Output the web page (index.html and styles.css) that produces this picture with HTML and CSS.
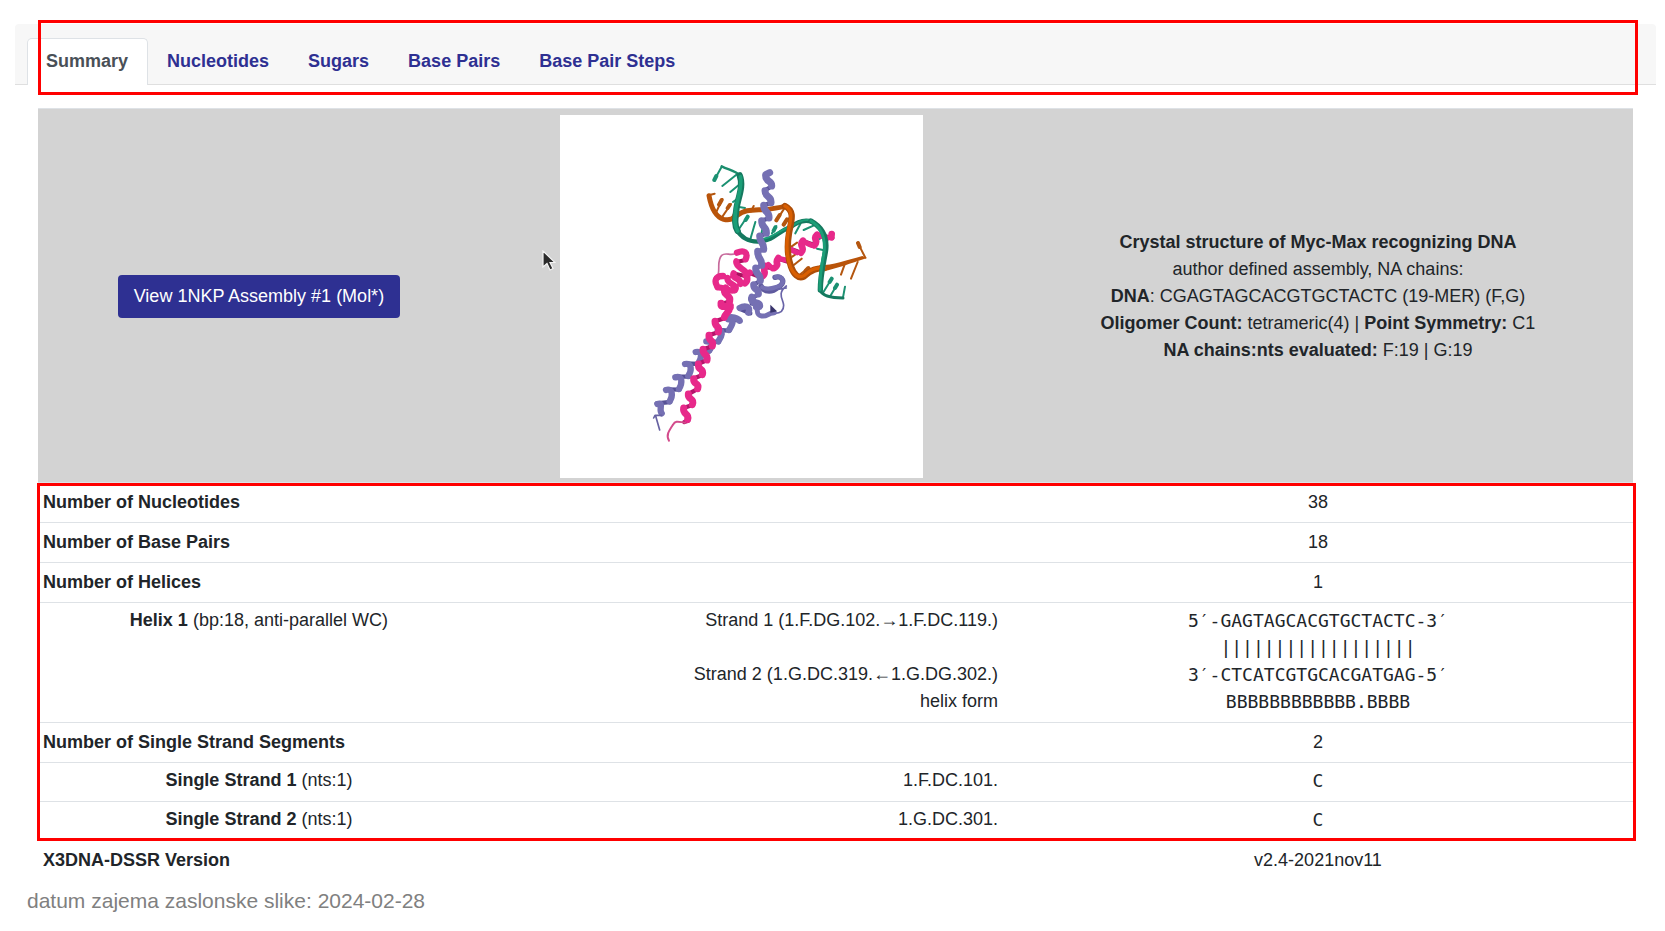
FILE: index.html
```html
<!DOCTYPE html>
<html lang="sl">
<head>
<meta charset="utf-8">
<title>1NKP – Summary</title>
<meta name="viewport" content="width=device-width, initial-scale=1">
<link rel="stylesheet" href="styles.css">
</head>
<body>
<main class="card">
  <nav class="tabs" aria-label="Annotations">
    <a class="tab tab-active" href="#summary" aria-current="page">Summary</a>
    <a class="tab" href="#nucleotides">Nucleotides</a>
    <a class="tab" href="#sugars">Sugars</a>
    <a class="tab" href="#base-pairs">Base Pairs</a>
    <a class="tab" href="#steps">Base Pair Steps</a>
  </nav>
  <div class="card-body" id="summary">
    <table class="summary">
      <colgroup><col class="col-name"><col class="col-detail"><col class="col-value"></colgroup>
      <tbody class="hero">
        <tr>
          <td><button class="view-button" type="button">View 1NKP Assembly #1 (Mol*)</button></td>
          <td class="hero-picture">
            <svg class="molecule" viewBox="-241 -105 1089 1089" role="img" aria-label="Myc-Max bound to DNA" fill="none" stroke-linecap="round" stroke-linejoin="round">
              <rect x="-243" y="-105" width="1092" height="1089" fill="#fff"/>
              <!-- base sticks -->
              <g stroke="#1b9172" stroke-width="6">
                <path d="M244 50L222 90M290 73L246 108M298 103L270 126M300 140L278 156M292 170L314 174M294 240L322 198M330 268L345 216M360 268L367 232M395 250L408 228M465 250L480 222M490 240L526 224M504 286L545 262M530 296L548 300M548 428L574 386M570 438L590 404M608 442L614 410"/>
                <path stroke-width="12" d="M228 78L222 90M322 200L316 210M405 232L400 242M574 386L568 396M590 404L584 414"/>
              </g>
              <g stroke="#b4560f" stroke-width="6">
                <path d="M205 136L223 131M226 190L246 147M242 206L272 162M272 208L284 184M332 184L340 168M408 212L434 172M430 226L444 206M450 292L470 278M456 320L475 306M452 352L484 326M476 376L504 354M612 346L602 374M652 336L632 386M675 323L652 278"/>
                <path stroke-width="12" d="M244 150L236 164M268 165L262 174M418 195L408 211M440 208L430 224M504 354L496 362M658 291L653 279"/>
              </g>
              <!-- DNA strands, far side -->
              <path stroke="#b9540a" stroke-width="15" d="M206 137C212 170 222 200 250 208C284 216 286 188 320 182C360 178 400 180 434 168"/>
              <path stroke="#15795f" stroke-width="13" d="M290 240C302 262 324 274 352 275C408 270 410 244 450 232C470 216 492 208 514 215"/>
              <path stroke="#1b9e77" stroke-width="6" d="M356 270C404 262 414 240 456 228C474 214 490 206 512 211"/>
              <path stroke="#1b8d6d" stroke-width="7" d="M244 49C266 60 284 62 298 76"/>
              <path stroke="#15795f" stroke-width="19" d="M298 76C312 110 290 150 288 180C284 210 282 226 292 243"/>
              <path stroke="#1b9e77" stroke-width="11" d="M300 80C308 112 288 150 286 182C282 210 282 226 292 243"/>
              <!-- pink arm behind the DNA -->
              <g stroke="#a9125f" stroke-width="13">
                <path d="M576 264L534 254M524 286L490 274M482 308L450 296M440 334L414 326M404 354L378 352M362 382L330 370"/>
              </g>
              <g stroke="#e7298a" stroke-width="20">
                <path d="M574 252L573 262M530 254C514 268 538 270 522 286M488 272C472 288 498 292 482 308M414 324C400 342 422 340 402 354M376 348C362 366 386 366 362 382M328 368C310 380 330 386 314 400"/>
              </g>
              <path stroke="#e7298a" stroke-width="16" d="M536 256L562 264M492 276L514 286M450 298L470 308M416 326L438 330M384 344L396 356"/>
              <!-- DNA strands, near side -->
              <path stroke="#ad4d08" stroke-width="19" d="M434 168C466 184 452 214 446 250C440 286 442 322 452 350C460 372 474 388 490 380C516 356 530 356 552 354"/>
              <path fill="#b9540a" d="M536 346C580 346 616 331 666 318L680 324C630 340 590 356 548 364Z"/>
              <path stroke="#d95f02" stroke-width="10" d="M434 168C464 184 448 214 443 250C437 286 440 322 450 350C460 374 476 386 492 376C516 352 530 356 552 352"/>
              <path stroke="#15795f" stroke-width="16" d="M512 213C546 232 560 264 556 300C552 330 540 370 540 420"/>
              <path stroke="#15795f" stroke-width="9" d="M540 422C548 440 574 444 608 444"/>
              <path stroke="#1b9e77" stroke-width="9" d="M512 213C544 232 554 264 552 300C548 330 537 370 539 420"/>
              <!-- loop regions -->
              <path stroke="#c76a9c" stroke-width="5" d="M290 308C272 322 258 304 244 316C230 332 238 350 234 372"/>
              <path stroke="#a9125f" stroke-width="12" d="M316 330L288 336M314 378L280 370M284 424L236 412M226 384L228 410"/>
              <path stroke="#e7298a" stroke-width="19" d="M290 308C312 298 324 308 316 328M288 334C284 354 324 358 316 376M280 370C272 388 304 382 300 402M248 378C224 378 222 394 230 408M262 384C256 402 296 404 284 420C268 428 248 410 232 412"/>
              <path stroke="#5f5a9e" stroke-width="16" d="M362 408C374 430 398 426 412 412C438 400 428 376 404 382"/>
              <path stroke="#7570b3" stroke-width="13" d="M366 412C386 422 402 412 418 408C436 394 424 376 406 381"/>
              <path stroke="#6964a8" stroke-width="5" d="M412 418L438 414M438 408C408 430 430 450 430 466C430 486 418 490 404 490"/>
              <!-- long purple helix, lower half -->
              <path stroke="#565196" stroke-width="13" d="M362 468L334 460M330 490L298 476M300 512L264 508M268 542L232 540M236 576L198 574M208 604L166 606M176 642L134 640M146 680L105 680M118 719L77 718M90 756L49 760"/>
              <path stroke="#7570b3" stroke-width="19" d="M334 440C324 464 364 450 358 470M298 474C312 466 334 468 324 488M264 508C268 494 296 506 298 512M264 508C286 508 274 526 266 540M232 540C252 540 244 560 234 574M198 574C220 574 216 590 206 602M166 606C188 602 184 624 174 640M134 642C156 638 154 662 144 678M105 682C128 676 126 700 116 717M77 720C98 714 98 738 88 754M51 762C72 756 54 778 64 790"/>
              <path stroke="#7570b3" stroke-width="15" d="M344 462C358 478 342 494 364 498C384 500 378 490 402 488"/>
              <path fill="#38346c" d="M390 464L410 484L390 488Z"/>
              <path stroke="#6762a2" stroke-width="5" d="M64 796L44 796L40 804M46 798L58 840"/>
              <!-- purple helix, upper half -->
              <path stroke="#5a559a" stroke-width="13" d="M396 108L372 122M394 158L370 166M388 204L364 212M380 250L358 258M372 298L352 304M366 346L346 354M362 392L340 404M356 432L336 444"/>
              <path stroke="#7570b3" stroke-width="21" d="M388 68L376 74C374 98 396 90 394 108M374 122C374 144 394 136 392 158M370 166C370 190 388 182 386 204M364 212C364 236 380 228 378 250M358 258C358 282 372 276 370 298M352 304C352 330 366 324 364 346M346 354C346 378 362 370 360 392M340 404C340 424 356 412 354 432M336 444C336 466 350 454 348 470"/>
              <!-- pink helix -->
              <path stroke="#b3156a" stroke-width="13" d="M270 454L242 462M254 504L224 514M236 546L204 556M218 588L188 598M202 630L172 642M188 674L158 686M174 716L144 732M158 764L130 774M144 812L132 816"/>
              <path stroke="#e7298a" stroke-width="21" d="M256 414C240 438 274 430 268 454M242 460C240 482 272 458 270 472M270 468C266 490 256 488 252 502M224 514C224 536 240 524 234 546M206 556C204 578 222 566 216 588M188 598C188 620 204 608 200 630M174 642C172 664 192 652 186 674M160 686C158 706 178 696 172 716M144 732C142 752 164 742 156 764M130 774C126 796 148 788 142 808"/>
              <path stroke="#d34c8c" stroke-width="6" d="M134 818C116 816 106 810 98 824C86 842 76 856 86 872"/>
            </svg>
          </td>
          <td>
            <strong>Crystal structure of Myc-Max recognizing DNA</strong><br>
            author defined assembly, NA chains:<br>
            <strong>DNA</strong>: CGAGTAGCACGTGCTACTC (19-MER) (F,G)<br>
            <strong>Oligomer Count:</strong> tetrameric(4) | <strong>Point Symmetry:</strong> C1<br>
            <strong>NA chains:nts evaluated:</strong> F:19 | G:19
          </td>
        </tr>
      </tbody>
      <tbody class="counts marked">
        <tr><th scope="row" colspan="2">Number of Nucleotides</th><td>38</td></tr>
        <tr><th scope="row" colspan="2">Number of Base Pairs</th><td>18</td></tr>
        <tr><th scope="row" colspan="2">Number of Helices</th><td>1</td></tr>
        <tr class="sub">
          <td><strong>Helix 1</strong> (bp:18, anti-parallel WC)</td>
          <td class="detail">Strand 1 (1.F.DG.102.→1.F.DC.119.)<br><br>Strand 2 (1.G.DC.319.←1.G.DG.302.)<br>helix form</td>
          <td class="sequence">5′-GAGTAGCACGTGCTACTC-3′<br>||||||||||||||||||<br>3′-CTCATCGTGCACGATGAG-5′<br>BBBBBBBBBBBB.BBBB</td>
        </tr>
        <tr><th scope="row" colspan="2">Number of Single Strand Segments</th><td>2</td></tr>
        <tr class="sub"><td><strong>Single Strand 1</strong> (nts:1)</td><td class="detail">1.F.DC.101.</td><td class="sequence">C</td></tr>
        <tr class="sub"><td><strong>Single Strand 2</strong> (nts:1)</td><td class="detail">1.G.DC.301.</td><td class="sequence">C</td></tr>
      </tbody>
      <tbody class="counts">
        <tr><th scope="row" colspan="2">X3DNA-DSSR Version</th><td>v2.4-2021nov11</td></tr>
      </tbody>
    </table>
  </div>
  <svg class="pointer" viewBox="0 0 14 22" aria-hidden="true"><path d="M1 1V17L5 13.500L8 20L11 18.500L8 12.500H13Z" fill="#2b2b2b" stroke="#f4f4f4" stroke-width="1.200"/></svg>
</main>
<p class="caption">datum zajema zaslonske slike: 2024-02-28</p>
</body>
</html>
```
FILE: styles.css
```css
* {
  box-sizing: border-box;
}

body {
  margin: 0;
  padding: 24px 9px 0 15px;
  background: #fff;
  color: #212529;
  font: 18px/27px "Liberation Sans", Arial, sans-serif;
}

.card {
  position: relative;
}

.tabs {
  position: relative;
  display: flex;
  padding: 14px 12px 0;
  background: #f7f7f7;
  border-bottom: 1px solid #dfdfdf;
  border-radius: 4px 4px 0 0;
}

.tab {
  margin-bottom: -1px;
  padding: 9px 19px 10px 18px;
  border: 1px solid transparent;
  border-bottom: 0;
  border-radius: 5px 5px 0 0;
  color: #2e3092;
  font-weight: bold;
  text-decoration: none;
}

.tab-active {
  background: #fff;
  border-color: #dee2e6;
  color: #495057;
}

.tabs::after,
.marked::after {
  content: "";
  position: absolute;
  border: 3px solid #f00;
  pointer-events: none;
}

.tabs::after {
  inset: -4px 18px -11px 23px;
}

.card-body {
  padding: 23px 23px 0;
}

.summary {
  width: 100%;
  table-layout: fixed;
  border-collapse: separate;
  border-spacing: 0;
}

.col-name {
  width: 27.7%;
}

.col-detail {
  width: 32.8%;
}

.col-value {
  width: 39.5%;
}

.summary th,
.summary td {
  padding: 6px 5px;
  border-top: 1px solid #dee2e6;
  text-align: center;
  vertical-align: top;
}

.summary th {
  text-align: left;
}

.summary .sub td {
  padding: 4px 5px 7px;
}

.summary .detail {
  text-align: right;
}

.summary .sequence {
  font-family: "DejaVu Sans Mono", monospace;
}

.summary .hero td {
  padding-top: 8px;
  vertical-align: middle;
}

.hero {
  background: #d3d3d3;
}

.summary .hero .hero-picture {
  padding-top: 6px;
  padding-bottom: 4px;
}

.molecule {
  display: block;
  width: 363px;
  height: 363px;
  margin: 0 auto;
}

.view-button {
  padding: 8px 16px;
  border: 0;
  border-radius: 4px;
  background: #2e3092;
  color: #fff;
  font: inherit;
}

.marked {
  position: relative;
}

.marked::after {
  inset: 1px -3px -1px -1px;
}

.pointer {
  position: absolute;
  top: 226px;
  left: 527px;
  width: 14px;
  height: 22px;
}

.caption {
  margin: 6px 0 0;
  padding: 0 12px;
  color: #808080;
  font-size: 21px;
  line-height: 30px;
}
```
